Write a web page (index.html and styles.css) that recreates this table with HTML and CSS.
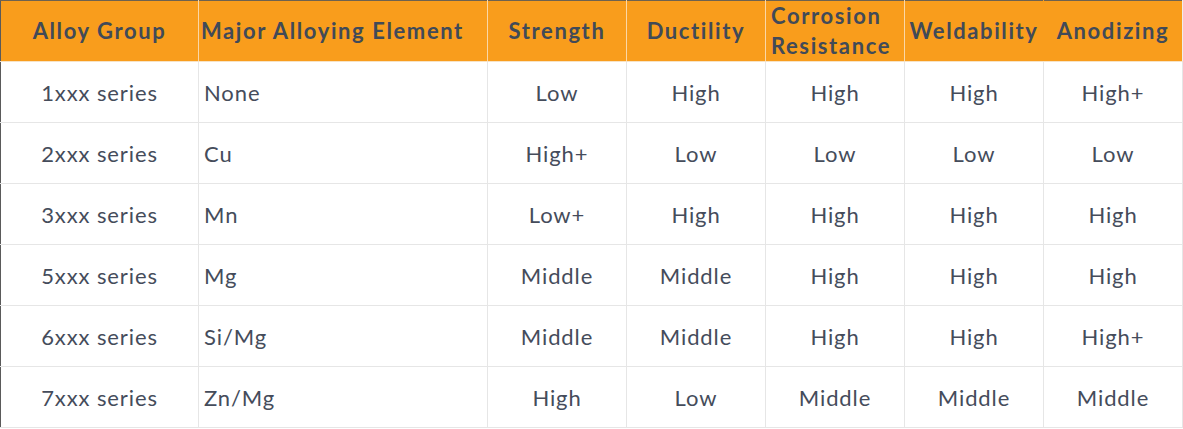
FILE: index.html
```html
<!DOCTYPE html>
<html>
<head>
<meta charset="utf-8">
<link rel="stylesheet" href="styles.css">
</head>
<body>
<table class="alloys">
  <colgroup>
    <col class="c-group"><col class="c-elem"><col class="c-val"><col class="c-val"><col class="c-val"><col class="c-val"><col class="c-val">
  </colgroup>
  <thead>
    <tr>
      <th>Alloy Group</th>
      <th class="left">Major Alloying Element</th>
      <th>Strength</th>
      <th>Ductility</th>
      <th class="wrap">Corrosion Resistance</th>
      <th class="nosep">Weldability</th>
      <th>Anodizing</th>
    </tr>
  </thead>
  <tbody>
    <tr><td>1xxx series</td><td class="left">None</td><td>Low</td><td>High</td><td>High</td><td>High</td><td>High+</td></tr>
    <tr><td>2xxx series</td><td class="left">Cu</td><td>High+</td><td>Low</td><td>Low</td><td>Low</td><td>Low</td></tr>
    <tr><td>3xxx series</td><td class="left">Mn</td><td>Low+</td><td>High</td><td>High</td><td>High</td><td>High</td></tr>
    <tr><td>5xxx series</td><td class="left">Mg</td><td>Middle</td><td>Middle</td><td>High</td><td>High</td><td>High</td></tr>
    <tr><td>6xxx series</td><td class="left">Si/Mg</td><td>Middle</td><td>Middle</td><td>High</td><td>High</td><td>High+</td></tr>
    <tr><td>7xxx series</td><td class="left">Zn/Mg</td><td>High</td><td>Low</td><td>Middle</td><td>Middle</td><td>Middle</td></tr>
  </tbody>
</table>
</body>
</html>
```
FILE: styles.css
```css
html, body {
  margin: 0;
  padding: 0;
  background: #ffffff;
}
.alloys {
  border-collapse: collapse;
  table-layout: fixed;
  width: 1183px;
  font-family: Lato, "Open Sans", sans-serif;
  color: #454c5b;
  border-top: 1px solid #6e6250;
  border-left: 1px solid #5a5a5a;
}
.c-group { width: 198px; }
.c-elem { width: 289px; }
.c-val { width: 139px; }
.alloys th {
  background: #f99d1c;
  color: #414a58;
  font-weight: 700;
  font-size: 22px;
  letter-spacing: 1.6px;
  height: 60px;
  padding: 0 2px;
  text-align: center;
  border-right: 1px solid #fbd7a6;
  border-bottom: 1px solid #f7e3c6;
  line-height: 30px;
  white-space: nowrap;
  overflow: visible;
}
.alloys th.wrap {
  white-space: normal;
  text-align: left;
  padding-left: 5px;
  padding-right: 0;
  line-height: 30px;
}
.alloys th.nosep { border-right-color: #f99d1c; }
.alloys th:last-child { border-right: 1px solid #f0eee8; }
.alloys td {
  font-size: 22px;
  letter-spacing: 0.9px;
  height: 60px;
  padding: 0 5px;
  text-align: center;
  border-right: 1px solid #e6e6e6;
  border-bottom: 1px solid #e6e6e6;
  white-space: nowrap;
}
.alloys .left { text-align: left; }
```
